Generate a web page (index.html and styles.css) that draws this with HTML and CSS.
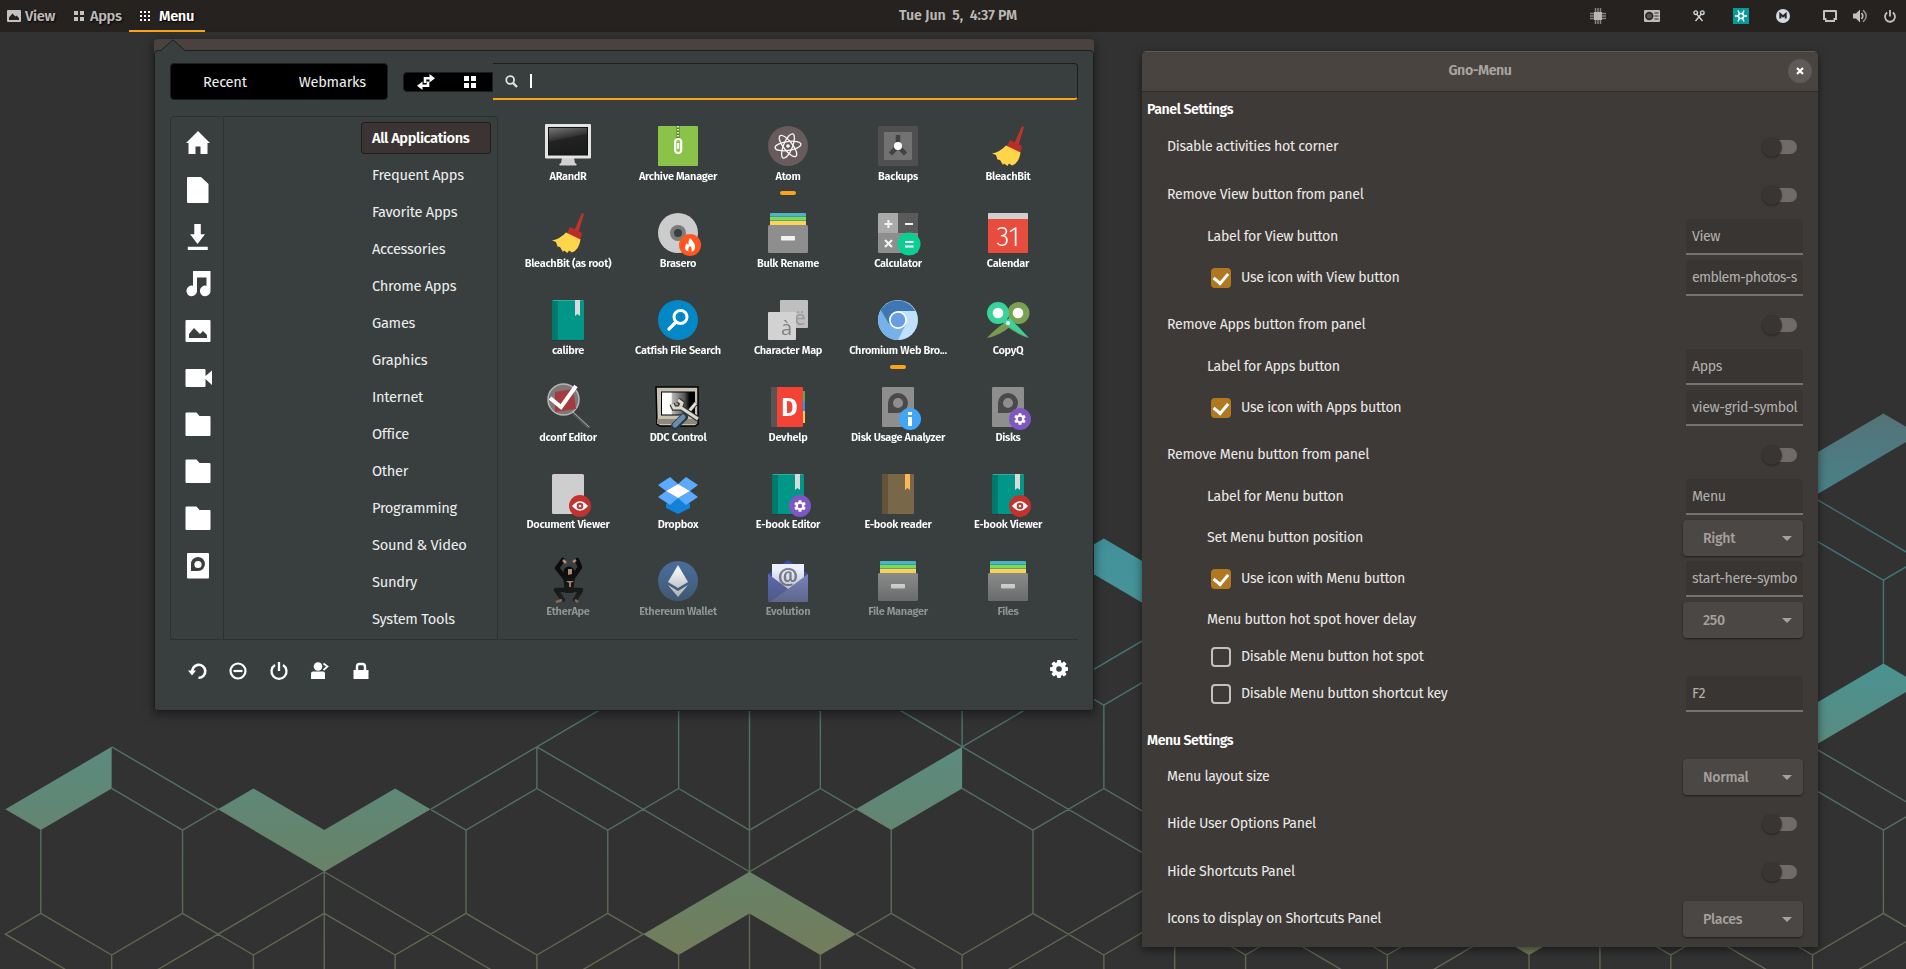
FILE: index.html
```
<!DOCTYPE html>
<html lang="en">
<head>
<meta charset="utf-8">
<title>Gno-Menu</title>
<link rel="stylesheet" href="styles.css">
</head>
<body>
<svg class="defs" width="0" height="0">
  <defs>
    <linearGradient id="wall" gradientUnits="userSpaceOnUse" x1="0" y1="-8" x2="0" y2="6">
      <stop offset="0" stop-color="#547378"/><stop offset=".19" stop-color="#43868e"/><stop offset=".24" stop-color="#43929b"/><stop offset=".43" stop-color="#4a9290"/>
      <stop offset=".57" stop-color="#5a8b80"/><stop offset=".79" stop-color="#688267"/><stop offset="1" stop-color="#787a55"/>
    </linearGradient>
    <linearGradient id="screen" x1="0" y1="0" x2="0.3" y2="1"><stop offset="0" stop-color="#777"/><stop offset=".45" stop-color="#333"/><stop offset=".5" stop-color="#222"/><stop offset="1" stop-color="#1c1c1c"/></linearGradient>
    <linearGradient id="bw"><stop offset="0" stop-color="#fff"/><stop offset=".3" stop-color="#fff"/><stop offset=".31" stop-color="#bbb"/><stop offset=".7" stop-color="#555"/><stop offset=".85" stop-color="#000"/></linearGradient>
    <symbol id="book" viewBox="0 0 48 48">
      <rect x="8" y="4" width="32" height="40.5" rx="1.2" fill="#202625" opacity=".5"/>
      <rect x="8" y="4" width="32" height="40" rx="1.2" fill="#009688"/><path d="M9.2 4H14V44H9.2A1.2 1.2 0 0 1 8 42.800V5.200A1.200 1.200 0 0 1 9.200 4Z" fill="#00796d"/>
      <path d="M9 4H39V5H9Z" fill="#35ab9f"/><path d="M31 4H36V20L33.500 18L31 20Z" fill="#dadada"/>
    </symbol>
    <symbol id="cabinet" viewBox="0 0 48 48">
      <path d="M6 5A1 1 0 0 1 7 4H41A1 1 0 0 1 42 5V9H6Z" fill="#4bb5c8"/><path d="M6 8H42V12H6Z" fill="#7ed957"/><path d="M6 12H42V17H6Z" fill="#ffd257"/>
      <path d="M6 7.500H42M6 11.500H42" stroke="#2c7f83" stroke-width=".5"/>
      <rect x="4" y="16" width="40" height="28" rx="1.500" fill="#8e8e8e"/><rect x="17" y="27" width="14" height="4.500" rx=".8" fill="#f2f2f2"/>
    </symbol>
    <symbol id="cog" viewBox="0 0 16 16">
      <g fill="#fff"><circle cx="8" cy="8" r="5"/><rect x="6.300" y="1.300" width="3.400" height="13.400" rx=".6"/><rect x="6.300" y="1.300" width="3.400" height="13.400" rx=".6" transform="rotate(60 8 8)"/><rect x="6.300" y="1.300" width="3.400" height="13.400" rx=".6" transform="rotate(120 8 8)"/></g>
    </symbol>
    <symbol id="badge-cog" viewBox="0 0 22 22"><circle cx="11" cy="11" r="11" fill="#7e57c2"/><use href="#cog" x="4" y="4" width="14" height="14"/><circle cx="11" cy="11" r="2.200" fill="#7e57c2"/></symbol>
    <symbol id="badge-eye" viewBox="0 0 22 22"><circle cx="11" cy="11" r="11" fill="#c1332f"/><path d="M3 11Q11 1.500 19 11Q11 20.500 3 11Z" fill="#fff"/><circle cx="11" cy="11" r="3.300" fill="#c1332f"/><circle cx="11" cy="11" r="1.300" fill="#fff"/></symbol>
    <symbol id="disk" viewBox="0 0 48 48"><rect x="8" y="4" width="32" height="40" rx="1.200" fill="#8e8e8e"/><path d="M14 30V20A10 10 0 1 1 24 30Z" fill="#4a4a4a"/><circle cx="24" cy="20" r="5" fill="#8e8e8e"/></symbol>
    <symbol id="broom" viewBox="0 0 48 48">
      <path d="M35 4L37 5L31.500 23L27.500 21Z" fill="#c0332b"/><path d="M23 18L35 24L33.500 31L19.500 25Z" fill="#b92c28"/>
      <path d="M19 23.500L33.500 30.500Q32 41 25 43.500L22 41.500L20.500 44L17 41.500L16 43L13 38L10.500 37.500L9 33L5 31.500Q13 30 19 23.500Z" fill="#ffd54c"/>
    </symbol>
    <symbol id="folder" viewBox="0 0 26 26"><path d="M1.500 0.500H11.500L14.500 4H24.500Q25.500 4 25.500 5V23Q25.500 24 24.500 24H1.500Q.5 24 .5 23V1.500Q.5.500 1.500.500Z" fill="#fff"/></symbol>
  </defs>
</svg>

<svg class="wallpaper" viewBox="0 0 1906 969">
  <g transform="translate(40.800 746.800) scale(70.870 41.650)" fill="url(#wall)">
    <path d="M1 0V1L0 2L-.5 1.500ZM2.500 1.500L3 1L4 2L5 1L5.500 1.500L4 3ZM13 0V1L12 2L11.500 1.500ZM10 3L11.500 4.500L11 5L10 4L9 5L8.500 4.500ZM15 -5L17 -3L16.500 -2.500L14.500 -4.500ZM21 5L20.500 4.500L21 4L21.500 4.500ZM26 -2L26.500 -1.500L25 0L24.500 -.5ZM26 -8L26.500 -7.500L25 -6L24.500 -6.500Z"/>
    <path class="lattice" d="M1 0L2.500 1.500L2 2L1 1M0 2V4L-.5 4.500L1 6M0 4L1 5L2 4V2M1 5V6M4 3V6M4 3L1 6M4 3L7 6M2 4L3 5L4 4L5 5L6 4L7 5L8 4V2L7 1L6 2V4M3 5V6M5 5V6M7 5V6M5.500 1.500L10 -3M5.500 1.500L6 2M7 0V1M7 0L10 3M8 2L9 1L10 2L11 1L11.500 1.500L10 3V-1M9 1V-1M11 1V-1M8 4L8.500 4.500L7 6M10 4V6M9 5V6M11 5V6M11.500 4.500L13 6M11.500 4.500L12 4V2M12 4L13 5L14 4V2L13 1M13 5V6M13 0V-1M12 -1L17 4M13 0L17 -4M14 2L15 1L16 2M15 1V-1L14 -2M15 -1L16 -2M14 4L15 5L16 4M15 5V6M13 6L17 2M16 4V6M16 4L17 5L18 4L19 5L20 4M17 5V6M19 5V6M17.500 4.500L19 6L20.500 4.500M21 5V6M22 4V6M22 4L23 5L24 4L25 5L26 4L27 5M23 5V6M25 5V6M23.500 4.500L25 6L27 4M26 4V2L25 1M26 2L27 1M25 0L27 2M26 -2V-4L25 -5M26 -4L27 -5M25 -6L27 -4"/>
  </g>
</svg>

<header class="topbar">
  <nav class="panel-left">
    <a class="pbtn view"><svg width="14" height="12" viewBox="0 0 14 12"><path fill="#c4c2c0" fill-rule="evenodd" d="M1 0H13Q14 0 14 1V11Q14 12 13 12H1Q0 12 0 11V1Q0 0 1 0ZM2 10H12V8L9.500 5.500L8.500 6.500L5.500 3.500L2 7.500Z"/></svg><span>View</span></a>
    <a class="pbtn apps"><svg width="10" height="10" viewBox="0 0 10 10" fill="#c4c2c0"><path d="M0 0H4V4H0ZM6 0H10V4H6ZM0 6H4V10H0ZM6 6H10V10H6Z"/></svg><span>Apps</span></a>
    <a class="pbtn menu on"><svg width="11" height="10" viewBox="0 0 11 10" fill="#fff"><path d="M0 0H2V2H0ZM4 0H6V2H4ZM8 0H10V2H8ZM0 4H2V6H0ZM4 4H6V6H4ZM8 4H10V6H8ZM0 8H2V10H0ZM4 8H6V10H4ZM8 8H10V10H8Z"/></svg><span>Menu</span></a>
  </nav>
  <div class="clock">Tue Jun&nbsp; 5,&nbsp; 4:37 PM</div>
  <div class="tray">
    <svg class="t1" width="16" height="16" viewBox="0 0 16 16"><path d="M5.500 0V16M8 0V16M10.500 0V16M0 5.500H16M0 8H16M0 10.500H16" stroke="#85827f" stroke-width="1.500"/><rect x="4" y="4" width="8" height="8" fill="#b9b7b5"/></svg>
    <svg class="t2" width="16" height="12" viewBox="0 0 16 12"><rect width="16" height="12" rx="1" fill="#bebcba"/><circle cx="5.300" cy="6" r="4.200" fill="#2d2926"/><circle cx="5.300" cy="6" r="2.500" fill="#57524f"/><path d="M10.500 3H14.500M10.500 6H14.500M10.500 9H14.500" stroke="#2d2926" stroke-width="1"/></svg>
    <svg class="t3" width="12" height="12" viewBox="0 0 12 12" fill="none" stroke="#cfd3d8" stroke-width="1.400"><circle cx="2.700" cy="2.700" r="1.800"/><circle cx="9.300" cy="2.700" r="1.800"/><path d="M4 4.500L9.500 11M8 4.500L2.500 11"/></svg>
    <svg class="t4" width="16" height="16" viewBox="0 0 16 16"><rect width="16" height="16" fill="#069a9a"/><g stroke="#fff" fill="none" stroke-width="1.500"><circle cx="8" cy="8" r="2.500"/><path d="M5 2.500L6.500 5.800M11 2.500L9.500 5.800M5 13.500L6.500 10.200M11 13.500L9.500 10.200M2 8H5.500M10.500 8H14"/></g></svg>
    <svg class="t5" width="14" height="14" viewBox="0 0 14 14"><circle cx="7" cy="7" r="7" fill="#d3dae4"/><path d="M4.300 9.500V5L7 7.500L9.700 5V9.500" fill="none" stroke="#2a2624" stroke-width="2"/></svg>
    <svg class="t6" width="14" height="12" viewBox="0 0 14 12"><path fill="#c4c2c0" fill-rule="evenodd" d="M1 0H13Q14 0 14 1V10H12V12H2V10H0V1Q0 0 1 0ZM2 2V8H3.500V10H10.500V8H12V2Z"/></svg>
    <svg class="t7" width="15" height="14" viewBox="0 0 15 14"><path d="M0 4.500H3L7 .5V13.500L3 9.500H0Z" fill="#c4c2c0"/><path d="M8.500 4Q11 7 8.500 10" fill="none" stroke="#c4c2c0" stroke-width="1.600"/><path d="M10 1.200Q16.500 7 10 12.800" fill="none" stroke="#8f8c8a" stroke-width="1.600"/></svg>
    <svg class="t8" width="12" height="13" viewBox="0 0 12 13" fill="none" stroke="#c4c2c0" stroke-width="1.800"><path d="M3.200 2.600A5 5 0 1 0 8.800 2.600M6 0V6.500"/></svg>
  </div>
</header>

<section class="menu-shadow">
  <svg class="arrow" width="26" height="13" viewBox="0 0 26 13"><path d="M0 12L13 .7L26 12V13H0Z" fill="#393f3f"/><path d="M0 11.500H1L13 .8L25 11.500H26" fill="none" stroke="#1b1e1e"/></svg>
  <div class="menu-body">
    <div class="menu-top">
      <div class="tabs"><span>Recent</span><span>Webmarks</span></div>
      <div class="modes">
        <svg width="18" height="16" viewBox="0 0 18 16"><path d="M12.500 0L18 4.300L12.500 8.600ZM5.500 7.400L0 11.700L5.500 16Z" fill="#fff"/><path d="M13.500 4.300H8V9M4.500 11.700H11V7.500" fill="none" stroke="#fff" stroke-width="2.600"/></svg>
        <svg width="12" height="12" viewBox="0 0 12 12"><path d="M0 0H5V5H0ZM7 0H12V5H7ZM0 7H5V12H0ZM7 7H12V12H7Z" fill="#fff"/></svg>
      </div>
      <div class="search">
        <svg width="13" height="13" viewBox="0 0 13 13" fill="none" stroke="#dfe2e2"><circle cx="5.200" cy="5" r="3.900" stroke-width="1.800"/><path d="M8 8L12 12" stroke-width="2.400"/></svg>
        <i class="caret"></i>
      </div>
    </div>
    <div class="menu-mid">
      <div class="places">
        <svg viewBox="0 0 26 26"><path d="M13 1L25 13H22.500V24H15.500V16.500H10.500V24H3.500V13H1Z" fill="#fff"/></svg>
        <svg viewBox="0 0 26 26"><path d="M3 0H16L23.500 7V25Q23.500 26 22.500 26H3Q2 26 2 25V1Q2 0 3 0Z" fill="#fff"/></svg>
        <svg viewBox="0 0 26 28"><path d="M9 0H16V11H20.500L12.500 21.500L4.500 11H9ZM2 24.500H23.500V28H2Z" fill="#fff"/></svg>
        <svg viewBox="0 0 26 26"><path d="M8 0H25.500V20A5.300 5.300 0 1 1 21.500 14.800V6.500H12V20A5.300 5.300 0 1 1 8 14.800Z" fill="#fff"/></svg>
        <svg viewBox="0 0 26 26"><path fill="#fff" fill-rule="evenodd" d="M1.500 2H24.500Q25.500 2 25.500 3V23Q25.500 24 24.500 24H1.500Q.5 24 .5 23V3Q.5 2 1.500 2ZM4 20H22V17L18 13L15 16L9 10L4 16Z"/></svg>
        <svg viewBox="0 0 26 26"><path d="M1.500 4H19.500Q20.500 4 20.500 5V11L27 5.500V20L20.500 14V21Q20.500 22 19.500 22H1.500Q.5 22 .5 21V5Q.5 4 1.500 4Z" fill="#fff"/></svg>
        <svg viewBox="0 0 26 26"><use href="#folder" width="26" height="26"/></svg>
        <svg viewBox="0 0 26 26"><use href="#folder" width="26" height="26"/></svg>
        <svg viewBox="0 0 26 26"><use href="#folder" width="26" height="26"/></svg>
        <svg viewBox="0 0 26 26"><rect x="2" y="0" width="22" height="25.500" rx="1" fill="#fff"/><path d="M6 18V11.500A7 7 0 1 1 13 18Z" fill="#393f3f"/><circle cx="13" cy="11.500" r="3.600" fill="#fff"/></svg>
      </div>
      <div class="cats">
        <span class="cat sel">All Applications</span><span class="cat">Frequent Apps</span><span class="cat">Favorite Apps</span><span class="cat">Accessories</span><span class="cat">Chrome Apps</span><span class="cat">Games</span><span class="cat">Graphics</span><span class="cat">Internet</span><span class="cat">Office</span><span class="cat">Other</span><span class="cat">Programming</span><span class="cat">Sound &amp; Video</span><span class="cat">Sundry</span><span class="cat">System Tools</span>
      </div>
      <div class="grid">
        <div class="app"><svg viewBox="0 0 48 48"><path d="M18 36H30L31 41Q34 42.500 32 43.500H16Q14 42.500 17 41Z" fill="#d0d0d0"/><rect x="1" y="2" width="46" height="34.500" rx="1" fill="#e4e4e4"/><rect x="4" y="5" width="40" height="28.500" fill="#111"/><rect x="5" y="6" width="38" height="26.500" fill="url(#screen)"/></svg><b>ARandR</b></div>
        <div class="app"><svg viewBox="0 0 48 48"><rect x="4" y="4" width="40" height="40" rx="1" fill="#8bc34a"/><path d="M24 4V17" stroke="#557a2b" stroke-width="3"/><path d="M24 4V17" stroke="#fff" stroke-width="1.600" stroke-dasharray="1.500 1.500"/><rect x="21.200" y="17" width="6" height="14" rx="3" fill="none" stroke="#fff" stroke-width="2.200"/><path d="M24.200 21V27" stroke="#fff" stroke-width="2"/></svg><b>Archive Manager</b></div>
        <div class="app run"><svg viewBox="0 0 48 48"><circle cx="24" cy="24" r="20" fill="#685b5d"/><g fill="none" stroke="#f5f5f5" stroke-width="1.300"><ellipse cx="24" cy="24" rx="13" ry="4.500" transform="rotate(-8 24 24)"/><ellipse cx="24" cy="24" rx="13" ry="4.500" transform="rotate(52 24 24)"/><ellipse cx="24" cy="24" rx="13" ry="4.500" transform="rotate(112 24 24)"/></g><circle cx="24" cy="24" r="1.800" fill="#fff"/></svg><b>Atom</b></div>
        <div class="app"><svg viewBox="0 0 48 48"><rect x="4" y="4" width="40" height="40" rx="1.500" fill="#4f4f4f"/><rect x="10" y="10" width="28" height="28" rx="1" fill="#727272"/><path d="M24 24V13M24 24L16.500 32M24 24L31.500 32" stroke="#424242" stroke-width="4.500"/><circle cx="24" cy="24" r="4" fill="#fff"/></svg><b>Backups</b></div>
        <div class="app"><svg><use href="#broom" width="48" height="48" x="3"/></svg><b>BleachBit</b></div>

        <div class="app"><svg><use href="#broom" width="48" height="48" x="3"/></svg><b>BleachBit (as root)</b></div>
        <div class="app"><svg viewBox="0 0 48 48"><circle cx="24" cy="24" r="20" fill="#ccc"/><circle cx="24" cy="24" r="8" fill="#7c7c7c"/><circle cx="24" cy="24" r="4" fill="#393f3f"/><circle cx="36" cy="36" r="11" fill="#ff5722"/><path d="M36 29Q42 35 41 39Q40 42.500 37.500 42.500Q38.500 39.500 36 37Q33.500 39.500 34.500 42.500Q31.500 42 31 39Q31 36 33 34Q33.500 36 34.500 35.500Q34 32 36 29Z" fill="#fff"/></svg><b>Brasero</b></div>
        <div class="app"><svg><use href="#cabinet" width="48" height="48"/></svg><b>Bulk Rename</b></div>
        <div class="app"><svg viewBox="0 0 48 48"><rect x="4" y="4" width="40" height="40" rx="1.500" fill="#8e8e8e"/><path d="M4 5.500Q4 4 5.500 4H24V24H4Z" fill="#a9a9a9"/><path d="M24 4H42.500Q44 4 44 5.500V24H24Z" fill="#5a5a5a"/><path d="M10.500 15H18.500M14.500 11V19M31 15H39M11 31L18 38M18 31L11 38" stroke="#f1f1f1" stroke-width="2.200"/><circle cx="35" cy="35" r="11.500" fill="#0bcf92"/><path d="M31 33H39.500M31 37.500H39.500" stroke="#fff" stroke-width="2.200"/></svg><b>Calculator</b></div>
        <div class="app"><svg viewBox="0 0 48 48"><rect x="4" y="4" width="40" height="40" rx="1" fill="#e84c3d"/><path d="M4 5Q4 4 5 4H43Q44 4 44 5V10H4Z" fill="#cfcfcf"/><text x="24" y="36.500" class="cal">31</text></svg><b>Calendar</b></div>

        <div class="app"><svg><use href="#book" width="48" height="48"/></svg><b>calibre</b></div>
        <div class="app"><svg viewBox="0 0 48 48"><circle cx="24" cy="24" r="20" fill="#0288c7"/><circle cx="26.500" cy="21" r="6.500" fill="none" stroke="#fff" stroke-width="3"/><path d="M22 26L15 33" stroke="#fff" stroke-width="3.200" stroke-linecap="round"/></svg><b>Catfish File Search</b></div>
        <div class="app"><svg viewBox="0 0 48 48"><rect x="16" y="4" width="28" height="28" rx="1" fill="#bfbfbf"/><text x="36" y="29" class="chr dim">ë</text><rect x="4" y="16" width="28" height="28" rx="1" fill="#d2d2d2"/><text x="22.500" y="39" class="chr">à</text></svg><b>Character Map</b></div>
        <div class="app run"><svg viewBox="0 0 48 48"><circle cx="24" cy="24" r="20" fill="#bfe0ff"/><path d="M24 24L24 44A20 20 0 0 1 6.500 14.500Z" fill="#77b1ea"/><path d="M24 24L32 28L24 44L21 32Z" fill="#77b1ea"/><path d="M6.700 14A20 20 0 0 1 41.300 15H24L15 28Z" fill="#3f77b4"/><circle cx="24" cy="24" r="9" fill="#fff"/><circle cx="24" cy="24" r="7.300" fill="#6a9ee2"/></svg><b>Chromium Web Bro...</b></div>
        <div class="app"><svg viewBox="0 0 48 48"><path d="M25 24L42 40Q44 42 45 42Q36 40 22 30ZM3 42Q9 35 20 27L27 30Q15 40 3 42Z" fill="#7a9a50"/><circle cx="34.500" cy="17" r="11" fill="#7aa052"/><circle cx="14" cy="17" r="11" fill="#37d39a"/><path d="M18 26L26 22L45 42Q33 37 18 26Z" fill="#37d39a"/><circle cx="14" cy="17" r="5.300" fill="#fff"/><circle cx="34" cy="17" r="5.300" fill="#fff"/><circle cx="24" cy="27" r="2" fill="#fff"/></svg><b>CopyQ</b></div>

        <div class="app"><svg viewBox="0 0 48 48"><path d="M29 28L47 44L44 46L27 30Z" fill="#555"/><path d="M29 29L45 44" stroke="#aaa" stroke-width="1"/><circle cx="19.500" cy="16.500" r="15.500" fill="#7d7776" stroke="#b6b6b6" stroke-width="1.500"/><path d="M11 9L29 6L32 26L11 29Z" fill="#a43b3e"/><path d="M6 15L17 24L32 3" fill="none" stroke="#fff" stroke-width="4"/></svg><b>dconf Editor</b></div>
        <div class="app"><svg viewBox="0 0 48 48"><path d="M2 4H44V41L41 43H6L3 41Z" fill="#c5c0b0" stroke="#000" stroke-width="1.500"/><path d="M3 36H43V41H3Z" fill="#8d887a"/><rect x="7.500" y="9" width="33" height="23" fill="url(#bw)" stroke="#000"/><path d="M42 20L31 33" stroke="#222" stroke-width="5"/><path d="M42 20L31 33" stroke="#ddd" stroke-width="3"/><path d="M30 34L21 43" stroke="#25394c" stroke-width="8" stroke-linecap="round"/><path d="M29 34L21 42" stroke="#6c8ba8" stroke-width="5" stroke-linecap="round"/><path d="M24 17L28 20L26 25L20 25L18 21M26 24L44 36" fill="none" stroke="#333" stroke-width="5.500"/><path d="M24 17L28 20L26 25L20 25L18 21M26 24L44 36" fill="none" stroke="#ddd8cc" stroke-width="3.200"/></svg><b>DDC Control</b></div>
        <div class="app"><svg viewBox="0 0 48 48"><path d="M38 8H41V18H38Z" fill="#4caf50"/><path d="M38 18H41V28H38Z" fill="#2196f3"/><path d="M38 28H41V40H38Z" fill="#ffc94d"/><rect x="7" y="4" width="32" height="40" rx="1.200" fill="#f44336"/><path d="M8 4H13V44H8Q7 44 7 43V5Q7 4 8 4Z" fill="#555"/><text x="25.500" y="33" class="dev">D</text></svg><b>Devhelp</b></div>
        <div class="app"><svg viewBox="0 0 48 48"><use href="#disk"/><circle cx="36" cy="36" r="11" fill="#42a5f5"/><path d="M34 29H38V32H34ZM34 34H38V43H34Z" fill="#fff"/></svg><b>Disk Usage Analyzer</b></div>
        <div class="app"><svg viewBox="0 0 48 48"><use href="#disk"/><use href="#badge-cog" x="25" y="25" width="22" height="22"/></svg><b>Disks</b></div>

        <div class="app"><svg viewBox="0 0 48 48"><rect x="8" y="4" width="32" height="40" rx="1.500" fill="#cecece"/><use href="#badge-eye" x="25" y="25" width="22" height="22"/></svg><b>Document Viewer</b></div>
        <div class="app"><svg viewBox="0 0 48 48"><path d="M12 34V38L24 44L36 38V34L24 26Z" fill="#1282d8"/><path d="M16 7L24 14L12 21L4 15ZM32 7L44 15L36 21L24 14ZM12 21L24 28L16 35L4 27ZM36 21L44 27L32 35L24 28Z" fill="#5aaaff"/><path d="M24 14L36 21L24 28L12 21Z" fill="#fff"/></svg><b>Dropbox</b></div>
        <div class="app"><svg viewBox="0 0 48 48"><use href="#book"/><use href="#badge-cog" x="25" y="25" width="22" height="22"/></svg><b>E-book Editor</b></div>
        <div class="app"><svg viewBox="0 0 48 48"><rect x="8" y="4" width="32" height="40" rx="1.200" fill="#786749"/><path d="M9 4H14V44H9Q8 44 8 43V5Q8 4 9 4Z" fill="#62533a"/><path d="M31 4H36V20L33.500 18L31 20Z" fill="#fbb954"/></svg><b>E-book reader</b></div>
        <div class="app"><svg viewBox="0 0 48 48"><use href="#book"/><use href="#badge-eye" x="25" y="25" width="22" height="22"/></svg><b>E-book Viewer</b></div>

        <div class="app"><svg viewBox="0 0 48 48"><g fill="none" stroke="#0c0c0c" stroke-linecap="round" stroke-linejoin="round" stroke-width="4.500"><path d="M19 3L13 11L21 21M33 3L36 10L28 22"/><path d="M22 33L12 33L19 43M27 33L37 33L31 43"/></g><path d="M19 20H31L29 36H21Z" fill="#0c0c0c"/><circle cx="25" cy="15" r="5.500" fill="#0c0c0c"/><path d="M24 12L28 12L28 17L24 18ZM22 24H30L27 26V30H25V26Z" fill="#b98a70"/><path d="M19 3L22 6M32 3L29 5M18 43L12 45M31 43L34 45" stroke="#b98a70" stroke-width="2.500"/></svg><b>EtherApe</b></div>
        <div class="app"><svg viewBox="0 0 48 48"><circle cx="24" cy="24" r="20" fill="#486a95"/><path d="M24 8L34 25L24 31L14 25Z" fill="#f2f4f8"/><path d="M14 28L24 34L34 28L24 40Z" fill="#f2f4f8"/></svg><b>Ethereum Wallet</b></div>
        <div class="app"><svg viewBox="0 0 48 48"><path d="M4 17L24 3L44 17V44H4Z" fill="#3f4fa8"/><rect x="8" y="7" width="32" height="30" fill="#eceffd"/><text x="24" y="25" class="at">@</text><path d="M4 17L24 32L44 17V44Q44 45 43 45H5Q4 45 4 44Z" fill="#7c87c4"/><path d="M4 17L24 32L6 45H4Z" fill="#5f6cba"/></svg><b>Evolution</b></div>
        <div class="app"><svg><use href="#cabinet" width="48" height="48"/></svg><b>File Manager</b></div>
        <div class="app"><svg><use href="#cabinet" width="48" height="48"/></svg><b>Files</b></div>
      </div>
    </div>
    <div class="session">
      <svg viewBox="0 0 18 18"><path d="M4.500 11A6.500 6.500 0 1 1 10.500 15.800" fill="none" stroke="#fff" stroke-width="2.600"/><path d="M0 8.500H8L4 13.500Z" fill="#fff"/></svg>
      <svg viewBox="0 0 18 18"><circle cx="9" cy="9" r="7.500" fill="none" stroke="#fff" stroke-width="2.200"/><path d="M4.500 9H13.500" stroke="#fff" stroke-width="2.200"/></svg>
      <svg viewBox="0 0 18 18"><path d="M5 3A7.500 7.500 0 1 0 13 3M9 0V9" fill="none" stroke="#fff" stroke-width="2.300"/></svg>
      <svg viewBox="0 0 18 18"><circle cx="7" cy="4.500" r="4.300" fill="#fff"/><path d="M0 17V11.500Q0 9.500 2 9.500H12Q14 9.500 14 11.500V17Z" fill="#fff"/><path d="M12.500 1.500L16.500 4.500L12.500 8" fill="none" stroke="#fff" stroke-width="1.700"/></svg>
      <svg viewBox="0 0 18 18"><path d="M1.500 8H16.500V17H1.500Z" fill="#fff"/><path d="M5 8V5Q5 2 7.500 2H10.500Q13 2 13 5V8" fill="none" stroke="#fff" stroke-width="2.400"/></svg>
      <svg class="gear" viewBox="0 0 18 18" fill="#fff"><circle cx="9" cy="9" r="7"/><g><rect x="7" y="0" width="4" height="18" rx="1"/><rect x="7" y="0" width="4" height="18" rx="1" transform="rotate(45 9 9)"/><rect x="7" y="0" width="4" height="18" rx="1" transform="rotate(90 9 9)"/><rect x="7" y="0" width="4" height="18" rx="1" transform="rotate(135 9 9)"/></g><circle cx="9" cy="9" r="2.800" fill="#393f3f"/></svg>
    </div>
  </div>
</section>

<section class="dialog">
  <header class="dlg-head"><span>Gno-Menu</span><i class="close"><svg width="8" height="8" viewBox="0 0 8 8"><path d="M1 1L7 7M7 1L1 7" stroke="#fff" stroke-width="2.200"/></svg></i></header>
  <div class="dlg-body">
    <h2 class="first">Panel Settings</h2>
    <div class="row tog"><label>Disable activities hot corner</label><i class="switch"></i></div>
    <div class="row tog"><label>Remove View button from panel</label><i class="switch"></i></div>
    <div class="row sub"><label>Label for View button</label><span class="entry">View</span></div>
    <div class="row sub"><i class="check on"></i><label>Use icon with View button</label><span class="entry tight">emblem-photos-s</span></div>
    <div class="row tog"><label>Remove Apps button from panel</label><i class="switch"></i></div>
    <div class="row sub"><label>Label for Apps button</label><span class="entry">Apps</span></div>
    <div class="row sub"><i class="check on"></i><label>Use icon with Apps button</label><span class="entry">view-grid-symbol</span></div>
    <div class="row tog"><label>Remove Menu button from panel</label><i class="switch"></i></div>
    <div class="row sub"><label>Label for Menu button</label><span class="entry">Menu</span></div>
    <div class="row sub"><label>Set Menu button position</label><span class="combo">Right</span></div>
    <div class="row sub"><i class="check on"></i><label>Use icon with Menu button</label><span class="entry">start-here-symbo</span></div>
    <div class="row sub"><label>Menu button hot spot hover delay</label><span class="combo">250</span></div>
    <div class="row sub short"><i class="check"></i><label>Disable Menu button hot spot</label></div>
    <div class="row sub"><i class="check"></i><label>Disable Menu button shortcut key</label><span class="entry">F2</span></div>
    <h2>Menu Settings</h2>
    <div class="row top"><label>Menu layout size</label><span class="combo">Normal</span></div>
    <div class="row tog"><label>Hide User Options Panel</label><i class="switch"></i></div>
    <div class="row tog"><label>Hide Shortcuts Panel</label><i class="switch"></i></div>
    <div class="row top"><label>Icons to display on Shortcuts Panel</label><span class="combo">Places</span></div>
  </div>
</section>
</body>
</html>
```
FILE: styles.css
```
* { box-sizing: border-box; }
body {
  margin: 0; width: 1906px; height: 969px; overflow: hidden; position: relative;
  background: #323232; color: #fff;
  font-family: "Fira Sans", "Open Sans", "Noto Sans", sans-serif; font-size: 13.33px;
}
svg { display: block; flex: none; overflow: visible; }
.defs { position: absolute; }
.wallpaper { position: absolute; left: 0; top: 0; width: 1906px; height: 969px; overflow: hidden; }
.lattice { fill: none; stroke: url(#wall); stroke-width: 1.4px; vector-effect: non-scaling-stroke; opacity: .72; }

/* top panel */
.topbar { position: relative; height: 32px; background: #262220; display: grid; grid-template-columns: 1fr auto 1fr; align-items: stretch; font-weight: 600; font-size: 14.67px; letter-spacing: -.35px; color: #bbb9b7; }
.panel-left { display: flex; }
.pbtn { display: flex; align-items: center; text-shadow: 1px 1px 2px #000; }
.view { padding-left: 7px; gap: 4px; width: 74px; }
.apps { gap: 6px; width: 55px; }
.menu { gap: 8px; width: 76px; padding-left: 11px; color: #fff; border-bottom: 2px solid #faa41a; padding-top: 2px; }
.clock { display: flex; align-items: center; padding-bottom: 1px; padding-left: 10px; font-size: 14.2px; letter-spacing: -.1px; }
.tray { display: flex; justify-content: flex-end; align-items: center; padding-right: 10px; }
.t2 { margin-left: 38px; } .t3 { margin-left: 33px; } .t4 { margin-left: 28px; } .t5 { margin-left: 27px; }
.t6 { margin-left: 33px; } .t7 { margin-left: 16px; } .t8 { margin-left: 16px; }

/* applications menu */
.menu-shadow { position: absolute; left: 154px; top: 39px; width: 940px; height: 672px; padding-top: 11px; border-radius: 4px; background: #4b413e; box-shadow: 0 3px 10px 2px rgba(0,0,0,.35); }
.arrow { position: absolute; left: 6px; top: 0; z-index: 2; }
.menu-body { height: 661px; background: #393f3f; border: 1px solid #1b1e1e; border-radius: 4px; padding: 12px 15px 0 15px; }
.menu-top { display: flex; align-items: center; height: 37px; }
.tabs { width: 218px; height: 37px; background: #000; border: 1px solid #1b1e1e; border-radius: 4px; display: flex; align-items: center; padding-left: 32px; gap: 52px; font-size: 14.67px; letter-spacing: -.25px; color: #eee; }
.modes { margin-left: 15px; width: 90px; height: 20px; background: #000; border: 1px solid #1b1e1e; border-radius: 4px 0 0 4px; display: flex; align-items: center; gap: 29px; padding-left: 13px; }
.search { width: 585px; height: 37px; border: 1px solid #1b1e1e; border-left: 0; border-bottom: 2px solid #faa41a; border-radius: 0 4px 4px 0; display: flex; align-items: center; padding-left: 12px; gap: 12px; }
.caret { width: 2px; height: 14px; background: #fff; }
.menu-mid { display: flex; margin-top: 16px; height: 524px; width: 908px; border-bottom: 1px solid #2c3232; }
.places { width: 54px; height: 524px; border: 1px solid #2c3232; border-radius: 4px 0 0 4px; padding: 13px 0 0 14px; display: flex; flex-direction: column; gap: 21px; }
.places svg { width: 26px; height: 26px; }
.cats { width: 274px; height: 524px; border: 1px solid #2c3232; border-left: 0; border-radius: 0 4px 0 0; padding: 5px 6px 0 137px; display: flex; flex-direction: column; gap: 5px; }
.cat { height: 32px; line-height: 32px; padding-left: 11px; font-size: 14.67px; letter-spacing: -.3px; color: #eceeee; white-space: nowrap; }
.sel { font-weight: 600; letter-spacing: -.42px; color: #fff; line-height: 30px; padding-left: 10px; background: #3b3432; border: 1px solid #1b1e1e; border-radius: 3px; }
.grid { flex: none; display: grid; grid-template-columns: repeat(5, 110px); grid-auto-rows: 87px; padding: 6px 0 0 15px; height: 523px; overflow: hidden; -webkit-mask-image: linear-gradient(#000 454px, rgba(0,0,0,.45) 494px, rgba(0,0,0,.3) 523px); mask-image: linear-gradient(#000 454px, rgba(0,0,0,.45) 494px, rgba(0,0,0,.3) 523px); }
.app { display: flex; flex-direction: column; align-items: center; gap: 0; }
.app > svg { width: 48px; height: 48px; }
.app b { font-weight: 600; font-size: 11px; letter-spacing: -.3px; line-height: 13px; white-space: nowrap; }
.run::after { content: ""; width: 16px; height: 4px; border-radius: 2px; background: #faa41a; margin-top: 8px; }
.cal { font: 300 27px "Fira Sans", "Open Sans", sans-serif; fill: #fff; text-anchor: middle; }
.chr { font: 20px "Open Sans", sans-serif; fill: #808080; text-anchor: middle; }
.dim { fill: #999; }
.dev { font: bold 25px "Fira Sans", "Open Sans", sans-serif; fill: #fff; text-anchor: middle; }
.at { font: 500 20px "Fira Sans", "Open Sans", sans-serif; fill: #7b8290; text-anchor: middle; }
.session { display: flex; align-items: center; gap: 23px; padding: 22px 0 0 18px; }
.session svg { width: 18px; height: 18px; }
.gear { margin-left: auto; margin-right: 10px; margin-top: -4px; }

/* preferences window */
.dialog { position: absolute; left: 1142px; top: 51px; width: 676px; height: 896px; background: #3e3a37; border-radius: 5px 5px 0 0; box-shadow: 0 3px 8px rgba(0,0,0,.5); overflow: hidden; font-size: 14.2px; letter-spacing: -.32px; }
.dlg-head { height: 41px; background: #49443f; border-top: 1px solid #5d5853; border-bottom: 1px solid #2f2b29; display: flex; align-items: center; justify-content: center; position: relative; font-weight: 600; letter-spacing: -.45px; color: #aaa6a2; }
.dlg-head span { padding-bottom: 2px; }
.close { position: absolute; right: 6px; top: 7px; width: 24px; height: 24px; border-radius: 50%; background: #5f5a57; display: flex; align-items: center; justify-content: center; }
.dlg-body { padding: 8px 15px 0 5px; display: flex; flex-direction: column; gap: 5px; }
h2 { margin: 0; padding-top: 15px; height: 32px; font-size: 14.2px; letter-spacing: -.45px; line-height: 18px; font-weight: 600; }
.first { padding: 1px 0 0; height: 18px; }
.row { display: flex; align-items: center; height: 36px; padding-left: 20px; color: #eceae8; }
.row label { padding-bottom: 1px; white-space: nowrap; }
.tog { height: 38px; margin-top: 5px; padding-right: 6px; }
.top { margin-top: 5px; }
.sub { padding-left: 60px; }
.short { height: 28px; }
.entry { margin-left: auto; width: 117px; height: 36px; padding: 0 6px; line-height: 35px; background: #393532; border-bottom: 2px solid #757271; border-radius: 4px 4px 0 0; color: #b2afad; white-space: nowrap; letter-spacing: -.42px; }
.tight { letter-spacing: -.7px; }
.combo { margin-left: auto; width: 120px; height: 36px; padding: 0 11px 0 20px; display: flex; align-items: center; justify-content: space-between; background: #4b4744; border-radius: 4px; box-shadow: 0 1px 2px rgba(0,0,0,.5); color: #a5a19e; font-weight: 500; }
.combo::after { content: ""; border: 5px solid transparent; border-top-color: #a5a19e; border-bottom: 0; margin-top: 1px; }
.switch { margin-left: auto; position: relative; width: 35px; height: 14px; border-radius: 7px; background: linear-gradient(90deg, transparent 14px, #706b69 14px); }
.switch::before { content: ""; position: absolute; left: 0; top: -3px; width: 20px; height: 20px; border-radius: 50%; background: #393532; box-shadow: 0 1px 2px rgba(0,0,0,.4); }
.check { width: 20px; height: 20px; margin: 0 10px 0 4px; border: 2px solid #c3c1bf; border-radius: 4px; flex: none; }
.check.on { border: 0; background: #b07921; display: flex; align-items: center; justify-content: center; }
.check.on::before { content: ""; width: 7px; height: 11px; border: solid #fff; border-width: 0 3px 3px 0; transform: translate(0, -1px) rotate(40deg); }
```
